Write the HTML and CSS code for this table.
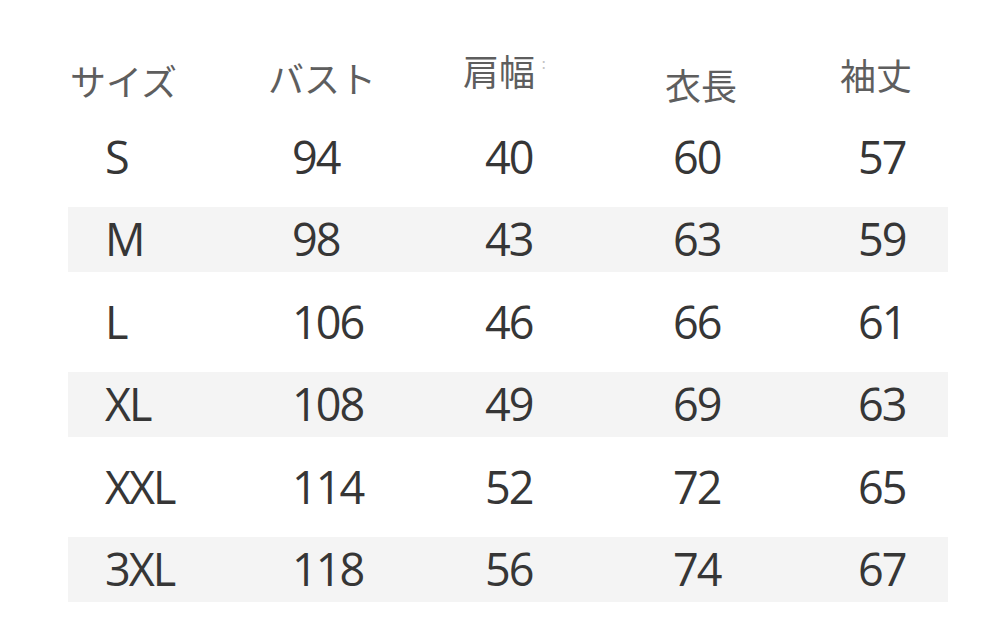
FILE: index.html
```html
<!DOCTYPE html>
<html lang="ja">
<head>
<meta charset="utf-8">
<title>サイズ表</title>
<link rel="stylesheet" href="styles.css">
</head>
<body>
<div class="chart">
  <div class="head">
    <div class="h h1">サイズ</div>
    <div class="h h2">バスト</div>
    <div class="h h3">肩幅<span class="mark">:</span></div>
    <div class="h h4">衣長</div>
    <div class="h h5">袖丈</div>
  </div>
  <div class="rows">
    <div class="row"><span>S</span><span>94</span><span>40</span><span>60</span><span>57</span></div>
    <div class="row band"><span>M</span><span>98</span><span>43</span><span>63</span><span>59</span></div>
    <div class="row"><span>L</span><span>106</span><span>46</span><span>66</span><span>61</span></div>
    <div class="row band"><span>XL</span><span>108</span><span>49</span><span>69</span><span>63</span></div>
    <div class="row"><span>XXL</span><span>114</span><span>52</span><span>72</span><span>65</span></div>
    <div class="row band"><span>3XL</span><span>118</span><span>56</span><span>74</span><span>67</span></div>
  </div>
</div>
</body>
</html>
```
FILE: styles.css
```css
html, body {
  margin: 0;
  padding: 0;
  background: #ffffff;
}
.chart {
  width: 880px;
  margin-left: 68px;
  padding-top: 48px;
}
.head {
  display: grid;
  grid-template-columns: 198px 195px 202px 175px 1fr;
  padding-left: 2px;
  height: 76px;
  align-items: start;
  font-family: "Noto Sans CJK JP", sans-serif;
  font-size: 36px;
  line-height: 36px;
  color: #5e5e5e;
}
.h { white-space: nowrap; }
.h1 { margin-top: 14px; }
.h2 { margin-top: 11px; }
.h3 { margin-top: 4px; }
.h4 { margin-top: 18px; }
.h5 { margin-top: 8px; }
.mark {
  display: inline-block;
  margin-left: 6px;
  vertical-align: top;
  color: #c4c4c4;
  font-family: "DejaVu Sans", sans-serif;
  font-size: 16px;
  line-height: 24px;
}
.rows {
  display: flex;
  flex-direction: column;
  gap: 17.5px;
}
.row {
  display: grid;
  grid-template-columns: 187px 193px 188px 185px 1fr;
  padding-left: 37px;
  height: 65px;
  align-items: center;
  font-family: "Open Sans", sans-serif;
  font-size: 45px;
  line-height: 62px;
  letter-spacing: -2px;
  color: #363636;
}
.band {
  background: #f4f4f4;
}
```
